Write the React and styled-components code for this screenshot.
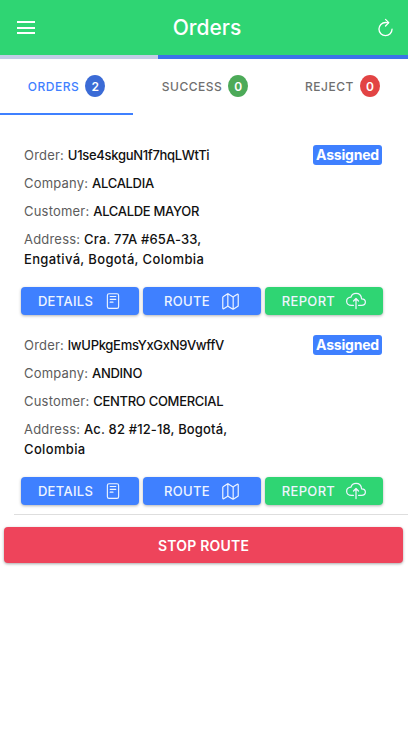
import styled, { createGlobalStyle } from "styled-components";
import { IoReaderOutline, IoMapOutline, IoCloudUploadOutline, IoRefreshOutline } from "react-icons/io5";

const Global = createGlobalStyle`
    html, body {
        margin: 0;
        padding: 0;
        background: #fff;
        font-family: Inter, "Liberation Sans", sans-serif;
    }
`

const Page = styled.div`
    width: 408px;
    height: 729px;
    overflow: hidden;
    display: flex;
    flex-direction: column;
`

const Header = styled.header`
    height: 55px;
    flex: none;
    background-color: #2fd573;
    color: white;
    display: flex;
    align-items: center;
    justify-content: space-between;
    padding: 0 12px 0 17px;
`

const Menu = styled.div`
    width: 18px;
    height: 9px;
    border-top: 2px solid white;
    border-bottom: 2px solid white;
    position: relative;
    &::after {
        content: "";
        position: absolute;
        left: 0;
        right: 0;
        top: 3.5px;
        height: 2px;
        background: white;
    }
`

const Title = styled.h1`
    margin: 0 0 0 4px;
    font-size: 21px;
    font-weight: 500;
`

const Progress = styled.div`
    height: 4px;
    flex: none;
    background: linear-gradient(to right, #c3cde6 158px, #3b73e8 158px);
`

const Tabs = styled.nav`
    display: flex;
    height: 56px;
    flex: none;
`

const Tab = styled.div`
    width: ${({ width }) => width}px;
    box-sizing: border-box;
    display: flex;
    align-items: center;
    justify-content: center;
    gap: 6px;
    font-size: 12px;
    font-weight: 500;
    letter-spacing: 0.5px;
    color: ${({ active }) => active ? "#3f80ff" : "#6f6f6f"};
    border-bottom: 2px solid ${({ active }) => active ? "#3f80ff" : "transparent"};
`

const Count = styled.span`
    width: 20px;
    height: 22px;
    border-radius: 50%;
    background-color: ${({ color }) => color};
    color: white;
    font-size: 12px;
    font-weight: 600;
    letter-spacing: 0;
    display: flex;
    align-items: center;
    justify-content: center;
`

const Orders = styled.main`
    padding-top: 30px;
    display: flex;
    flex-direction: column;
`

const Order = styled.section`
    height: 170px;
    padding: 0 26px 0 21px;
    display: flex;
    flex-direction: column;
    & + & {
        margin-top: 20px;
    }
`

const Rows = styled.div`
    padding-left: 3px;
    flex: 1;
`

const Row = styled.p`
    margin: 0 0 8px;
    font-size: 13px;
    line-height: 20px;
    letter-spacing: 0.2px;
    color: #5c5c5c;
    display: flex;
    justify-content: space-between;
    align-items: center;
`

const Value = styled.b`
    font-weight: 500;
    color: #111;
    letter-spacing: ${({ spacing }) => spacing}px;
`

const Status = styled.span`
    height: 20px;
    padding: 0 3px;
    border-radius: 3px;
    background-color: #3f80ff;
    color: white;
    font-size: 14px;
    font-weight: 700;
    line-height: 19px;
    letter-spacing: -0.2px;
`

const Actions = styled.div`
    display: flex;
    gap: 4px;
    margin-right: -1px;
`

const Action = styled.button`
    width: 118px;
    height: 28px;
    padding: 0;
    border: none;
    border-radius: 4px;
    background-color: ${({ color }) => color};
    color: #eef4ff;
    font-family: inherit;
    font-size: 13px;
    font-weight: 500;
    letter-spacing: 0.3px;
    box-shadow: 0 1px 3px rgba(0, 0, 0, 0.3);
    display: flex;
    align-items: center;
    justify-content: center;
    gap: 11px;
`

const Divider = styled.hr`
    margin: 9px 0 12px 14px;
    border: none;
    border-top: 1px solid #dedede;
`

const Stop = styled.button`
    width: 399px;
    height: 36px;
    margin-left: 4px;
    border: none;
    border-radius: 4px;
    background-color: #ee445b;
    color: white;
    font-family: inherit;
    font-size: 14px;
    font-weight: 600;
    letter-spacing: 0.2px;
    box-shadow: 0 1px 3px rgba(0, 0, 0, 0.35);
`

const orders = [
    { id: "U1se4skguN1f7hqLWtTi", company: "ALCALDIA", customer: "ALCALDE MAYOR", address: ["Cra. 77A #65A-33,", "Engativá, Bogotá, Colombia"] },
    { id: "lwUPkgEmsYxGxN9VwffV", company: "ANDINO", customer: "CENTRO COMERCIAL", address: ["Ac. 82 #12-18, Bogotá,", "Colombia"] },
];

const App = () => (
    <Page>
        <Global />
        <Header>
            <Menu />
            <Title>Orders</Title>
            <IoRefreshOutline size={21} />
        </Header>
        <Progress />
        <Tabs>
            <Tab width={133} active>ORDERS <Count color="#3b6bd6">2</Count></Tab>
            <Tab width={144}>SUCCESS <Count color="#4caa58">0</Count></Tab>
            <Tab width={131}>REJECT <Count color="#e24444">0</Count></Tab>
        </Tabs>
        <Orders>
            {orders.map((o) => (
                <Order key={o.id}>
                    <Rows>
                        <Row><span>Order: <Value spacing={-0.3}>{o.id}</Value></span><Status>Assigned</Status></Row>
                        <Row><span>Company: <Value spacing={-0.3}>{o.company}</Value></span></Row>
                        <Row><span>Customer: <Value spacing={-0.3}>{o.customer}</Value></span></Row>
                        <Row><span>Address: <Value spacing={0.15}>{o.address[0]}</Value><br /><Value spacing={0.35}>{o.address[1]}</Value></span></Row>
                    </Rows>
                    <Actions>
                        <Action color="#3f80ff">DETAILS <IoReaderOutline size={18} /></Action>
                        <Action color="#3f80ff">ROUTE <IoMapOutline size={19} /></Action>
                        <Action color="#2fd573">REPORT <IoCloudUploadOutline size={20} /></Action>
                    </Actions>
                </Order>
            ))}
            <Divider />
            <Stop>STOP ROUTE</Stop>
        </Orders>
    </Page>
);

export default App;
